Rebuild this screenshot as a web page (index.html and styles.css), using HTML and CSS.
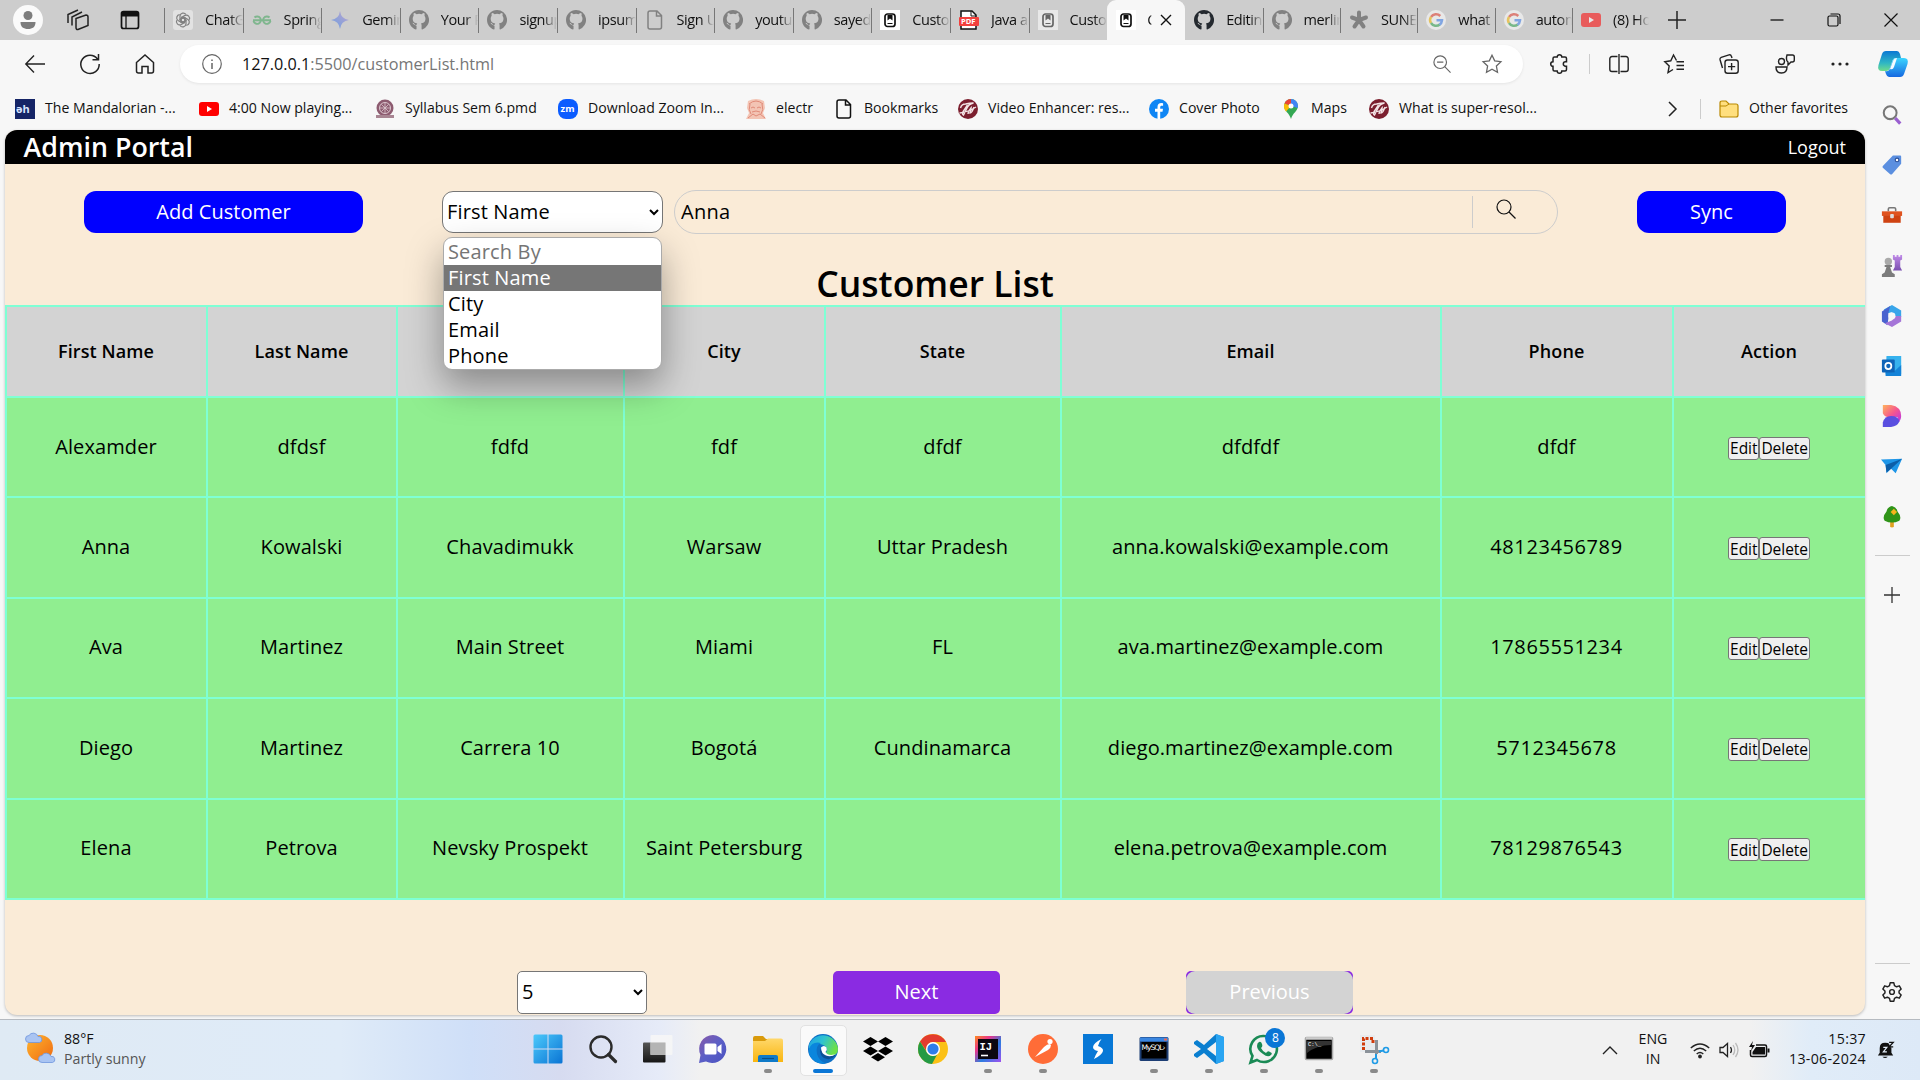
FILE: index.html
```html
<!DOCTYPE html>
<html lang="en">
<head>
<meta charset="utf-8">
<title>Customer List</title>
<link rel="stylesheet" href="styles.css">
</head>
<body>
<svg class="defs" width="0" height="0">
  <defs>
    <linearGradient id="g-blue" x1="0" y1="0" x2="1" y2="1"><stop offset="0" stop-color="#4cc9fb"/><stop offset="1" stop-color="#0a74d4"/></linearGradient>
    <linearGradient id="g-gem" x1="0" y1="1" x2="1" y2="0"><stop offset="0" stop-color="#6f9fe0"/><stop offset="1" stop-color="#b9a3cf"/></linearGradient>
    <linearGradient id="g-cop" x1="0" y1="0" x2="0" y2="1"><stop offset="0" stop-color="#0a78d4"/><stop offset=".6" stop-color="#2fb6c4"/><stop offset="1" stop-color="#6fdc8c"/></linearGradient>
    <linearGradient id="g-cop2" x1="0" y1="0" x2="0" y2="1"><stop offset="0" stop-color="#3bd5ff"/><stop offset="1" stop-color="#1668e0"/></linearGradient>
    <linearGradient id="g-purple" x1="0" y1="0" x2="1" y2="1"><stop offset="0" stop-color="#8a5aa8"/><stop offset=".5" stop-color="#5b5fc7"/><stop offset="1" stop-color="#4a52c0"/></linearGradient>
    <linearGradient id="g-folder" x1="0" y1="0" x2="0" y2="1"><stop offset="0" stop-color="#ffd86b"/><stop offset="1" stop-color="#f9b50f"/></linearGradient>
    <linearGradient id="g-edge" x1="0" y1="0" x2="1" y2=".4"><stop offset="0" stop-color="#1c9fe8"/><stop offset=".5" stop-color="#2fc3d0"/><stop offset="1" stop-color="#6be04a"/></linearGradient>
    <linearGradient id="g-ij" x1="0" y1="0" x2="1" y2="1"><stop offset="0" stop-color="#ff8a1e"/><stop offset=".3" stop-color="#e8358b"/><stop offset=".6" stop-color="#2b7de0"/><stop offset="1" stop-color="#a050f0"/></linearGradient>
    <linearGradient id="g-sun" x1="0" y1="0" x2="1" y2="1"><stop offset="0" stop-color="#ffb52e"/><stop offset="1" stop-color="#ef6a12"/></linearGradient>
    <linearGradient id="g-des" x1="0" y1="0" x2="1" y2="1"><stop offset="0" stop-color="#ffb35c"/><stop offset=".5" stop-color="#f5568f"/><stop offset="1" stop-color="#b331f0"/></linearGradient>
    <linearGradient id="g-dark" x1="0" y1="0" x2="0" y2="1"><stop offset="0" stop-color="#555"/><stop offset="1" stop-color="#161616"/></linearGradient>
    <linearGradient id="g-rook" x1="0" y1="0" x2="0" y2="1"><stop offset="0" stop-color="#c08ae8"/><stop offset="1" stop-color="#7a4fb0"/></linearGradient>
    <symbol id="i-github" viewBox="0 0 16 16"><path fill="currentColor" d="M8 0C3.58 0 0 3.58 0 8c0 3.54 2.29 6.53 5.47 7.59.4.07.55-.17.55-.38v-2.7c-.9-.1-2.9-1.1-3.3-2.3 1 .1 1.500.8 1.700 1.200.6.8 1.200.5 1.700.3.1-.5.3-.8.5-1-1.900-.2-3.650-.9-3.650-3.950 0-.87.31-1.590.82-2.150-.1-.2-.36-1 .08-2.100 0 0 .67-.21 2.200.82a7.600 7.600 0 0 1 4 0c1.530-1.040 2.200-.82 2.200-.82.44 1.100.16 1.900.08 2.100.51.56.82 1.270.82 2.150 0 3.070-1.870 3.750-3.650 3.950.29.25.54.73.54 1.480v3c0 .21.15.46.55.38A8 8 0 0 0 8 0z"/></symbol>
    <symbol id="i-page" viewBox="0 0 20 20"><path d="M5 1h7l4.500 4.500V17a2 2 0 0 1-2 2H5a2 2 0 0 1-2-2V3a2 2 0 0 1 2-2zM11.500 1.200V6h4.800" fill="none" stroke="currentColor" stroke-width="1.500"/></symbol>
    <symbol id="i-cust" viewBox="0 0 20 20"><path fill="#fff" d="M0 0h20v20H0z"/><rect x="5" y="4" width="10" height="12.500" rx="2.500" fill="none" stroke="#111" stroke-width="1.700"/><path d="M7.500 5h5v5.500l-2.500-2-2.500 2z" fill="#111"/><path d="M7.500 13.500h5" stroke="#111" stroke-width="1"/></symbol>
    <symbol id="i-google" viewBox="0 0 20 20"><circle cx="10" cy="10" r="10" fill="#fff"/><g fill="none" stroke-width="2.500"><path d="M14.300 6A6 6 0 0 0 5 7" stroke="#ea4335"/><path d="M5 6.800a6 6 0 0 0 0 6.400" stroke="#fbbc05"/><path d="M5 13a6 6 0 0 0 8.800 1.500" stroke="#34a853"/><path d="M13.500 14.700A6 6 0 0 0 16 10.300h-5.500" stroke="#4285f4"/></g></symbol>
    <symbol id="i-yt" viewBox="0 0 20 20"><rect y="3" width="20" height="14" rx="3" fill="#f00"/><path d="M8 7l5 3-5 3z" fill="#fff"/></symbol>
    <symbol id="i-maroon" viewBox="0 0 20 20"><circle cx="10" cy="10" r="10" fill="#7b1e2e"/><path d="M2.500 9q1-4 5-4 4-1 8-1-5 1-7 6l-3 6q-2-1 0-4l4-6M10 15q0-3 3-6l-1 5q2 0 4-6M1.500 14q9-1 16.500-6" fill="none" stroke="#f3e3e5" stroke-width="1.400"/></symbol>
    <symbol id="i-glass" viewBox="0 0 20 20"><circle cx="8" cy="8" r="7" fill="none" stroke="currentColor" stroke-width="1.200"/><path d="M13 13l6.500 6.500" stroke="currentColor" stroke-width="1.200"/></symbol>
    <symbol id="i-cloud" viewBox="0 0 18 11"><path d="M4 10.500a3.500 3.500 0 0 1 0-7A5 5 0 0 1 13 4.500a3 3 0 0 1 1.500 6z" fill="#a9c4f2" stroke="#6f96dd" stroke-width=".8"/></symbol>
  </defs>
</svg>

<div class="desktop">
  <header class="tabstrip">
    <div class="strip-left">
      <svg class="avatar" viewBox="0 0 30 30"><circle cx="15" cy="15" r="15" fill="#fafafa"/><circle cx="15" cy="10.500" r="4.500" fill="#7d7d7d"/><path d="M7.500 17h15c0 5-3 7-7.500 7s-7.500-2-7.500-7z" fill="#7d7d7d"/></svg>
      <svg class="ic22" viewBox="0 0 22 22" fill="none" stroke="#222" stroke-width="1.500"><path d="M1 14V5.500L11 1M5 16.500V8L15 3M9 9.500l10-3.500q2 0 2 2v8.500L11 20.500q-2 .3-2-2z"/></svg>
      <svg class="ic20" viewBox="0 0 20 20"><rect x="1.500" y="1.500" width="17" height="17" rx="2" fill="none" stroke="#111" stroke-width="1.700"/><path d="M1.500 2h17v4.500h-17z" fill="#111"/><path d="M6 6v12" stroke="#111" stroke-width="1.300"/></svg>
    </div>
    <nav class="tabs">
      <div class="tab dim"><svg viewBox="0 0 20 20"><rect width="20" height="20" rx="3" fill="#f4f4f4"/><g fill="none" stroke="#444" stroke-width="1.200"><path id="petal" d="M7 10.500V6a3.300 3.300 0 0 1 6-1.500M7 10.500l3 1.700 3.500-2"/><use href="#petal" transform="rotate(60 10 10)"/><use href="#petal" transform="rotate(120 10 10)"/><use href="#petal" transform="rotate(180 10 10)"/><use href="#petal" transform="rotate(240 10 10)"/><use href="#petal" transform="rotate(300 10 10)"/></g></svg><span>ChatGPT</span></div>
      <div class="tab dim"><svg viewBox="0 0 20 20" fill="none" stroke="#3fa45b" stroke-width="1.900"><path d="M1 10.300h18M2.500 7.500a3.700 3.700 0 1 1-1 3.500M17.500 7.500a3.700 3.700 0 1 0 1 3.500"/></svg><span>Spring</span></div>
      <div class="tab"><svg viewBox="0 0 20 20"><path d="M10 1q1 8 9 9-8 1-9 9-1-8-9-9 8-1 9-9z" fill="url(#g-gem)"/></svg><span>Gemini</span></div>
      <div class="tab dim"><svg><use href="#i-github"/></svg><span>Your Re</span></div>
      <div class="tab dim"><svg><use href="#i-github"/></svg><span>signup</span></div>
      <div class="tab dim"><svg><use href="#i-github"/></svg><span>ipsum</span></div>
      <div class="tab dim"><svg><use href="#i-page"/></svg><span>Sign Up</span></div>
      <div class="tab dim"><svg><use href="#i-github"/></svg><span>youtub</span></div>
      <div class="tab dim"><svg><use href="#i-github"/></svg><span>sayed</span></div>
      <div class="tab"><svg><use href="#i-cust"/></svg><span>Custom</span></div>
      <div class="tab"><svg viewBox="0 0 20 20"><path d="M2 1h11l4 4v14H2z" fill="#fff" stroke="#111" stroke-width="1.500"/><path d="M12 1v5h5" fill="none" stroke="#111"/><rect y="7" width="20" height="9" rx="1" fill="#f2403c"/><text x="2" y="14.200" font-size="7.500" font-weight="700" fill="#fff" font-family="Open Sans, sans-serif">PDF</text></svg><span>Java an</span></div>
      <div class="tab dim"><svg><use href="#i-cust"/></svg><span>Custom</span></div>
      <div class="tab active"><svg><use href="#i-cust"/></svg><span class="clip">C</span><svg class="close" viewBox="0 0 12 12"><path d="M1 1l10 10M11 1L1 11" stroke="#111" stroke-width="1.400"/></svg></div>
      <div class="tab"><svg class="dark"><use href="#i-github"/></svg><span>Editing</span></div>
      <div class="tab dim"><svg><use href="#i-github"/></svg><span>merlin</span></div>
      <div class="tab dim"><svg viewBox="0 0 20 20" stroke="#444" stroke-width="4" stroke-linecap="round"><path d="M10 10V2.500M10 10l7-2.500M10 10l4.500 6.500M10 10l-4.500 6.500M10 10L3 7.500"/></svg><span>SUNET</span></div>
      <div class="tab dim"><svg><use href="#i-google"/></svg><span>what i</span></div>
      <div class="tab dim"><svg><use href="#i-google"/></svg><span>autom</span></div>
      <div class="tab dim"><svg><use href="#i-yt"/></svg><span>(8) How</span></div>
    </nav>
    <svg class="newtab" viewBox="0 0 18 18"><path d="M9 0v18M0 9h18" stroke="#222" stroke-width="1.500"/></svg>
    <div class="winbtns">
      <svg viewBox="0 0 14 14"><path d="M.5 7h13" stroke="#111" stroke-width="1.300"/></svg>
      <svg viewBox="0 0 14 14" fill="none" stroke="#111" stroke-width="1.200"><rect x="1" y="3" width="10" height="10" rx="1.500"/><path d="M3.500 1h7.500a2 2 0 0 1 2 2v8"/></svg>
      <svg viewBox="0 0 14 14"><path d="M.5.5l13 13M13.500.5l-13 13" stroke="#111" stroke-width="1.200"/></svg>
    </div>
  </header>

  <div class="toolbar">
    <div class="nav-icons">
      <svg viewBox="0 0 20 20"><path d="M20 10H1M9 1.500L.8 10 9 18.500" fill="none" stroke="#222" stroke-width="1.400"/></svg>
      <svg viewBox="0 0 20 20"><path d="M17.500 5A9.200 9.200 0 1 0 19.200 10M18.500 0v5.800H12.500" fill="none" stroke="#222" stroke-width="1.500"/></svg>
      <svg viewBox="0 0 20 20"><path d="M1.500 8.500L10 1l8.500 7.500V17a2 2 0 0 1-2 2H13v-6.500H7V19H3.500a2 2 0 0 1-2-2z" fill="none" stroke="#222" stroke-width="1.500"/></svg>
    </div>
    <div class="address">
      <svg class="ic20" viewBox="0 0 20 20" fill="none" stroke="#666" stroke-width="1.200"><circle cx="10" cy="10" r="9.300"/><path d="M10 9v6M10 5.500v1.500" stroke-width="1.500"/></svg>
      <span class="url"><b>127.0.0.1</b>:5500/customerList.html</span>
      <svg class="ic18" viewBox="0 0 20 20" fill="none" stroke="#666" stroke-width="1.300"><circle cx="8" cy="8" r="7"/><path d="M13 13l6.500 6.500M4.500 8h7"/></svg>
      <svg class="ic20" viewBox="0 0 20 20"><path d="M10 1.200l2.700 5.700 6.200.8-4.500 4.300 1.100 6.200L10 15.200l-5.500 3 1.100-6.200L1.100 7.700l6.200-.8z" fill="none" stroke="#666" stroke-width="1.300"/></svg>
    </div>
    <div class="tools">
      <svg viewBox="0 0 20 20"><path d="M5.500 3h2.700a2.300 2.300 0 0 1 4.600 0H16q1.500 0 1.500 1.500v3.300h-1a2.200 2.200 0 0 0 0 4.400h1v3.300q0 1.500-1.500 1.500h-3.200a2.300 2.300 0 0 1-4.600 0H5.500Q4 17 4 15.500v-3.200a2.300 2.300 0 0 1 0-4.600V4.500Q4 3 5.500 3z" fill="none" stroke="#222" stroke-width="1.500"/></svg>
      <i class="vline"></i>
      <svg viewBox="0 0 20 20"><path d="M8.500 2.500H3A2.200 2.200 0 0 0 .8 4.700v10.600A2.200 2.200 0 0 0 3 17.500h5.500M11.500 2.500H17a2.200 2.200 0 0 1 2.200 2.200v10.600a2.200 2.200 0 0 1-2.200 2.200h-5.500M10 0v20" fill="none" stroke="#222" stroke-width="1.400"/></svg>
      <svg viewBox="0 0 20 20"><path d="M12.500 6.500L9.500 1 6.800 6.800.8 7.700l4.400 4.200L4 18.500l5-3M12.500 7.700H20M12.500 11.500H20M12.500 15.200H20" fill="none" stroke="#222" stroke-width="1.400"/></svg>
      <svg viewBox="0 0 20 20"><rect x="6" y="6" width="13.200" height="13.200" rx="2.500" fill="none" stroke="#222" stroke-width="1.400"/><path d="M12.600 9v7.200M9 12.600h7.200M3.500 14L1 5.500Q.7 4 2.200 3.400L10 .8q1.800-.5 2.300 1.200L13 4" fill="none" stroke="#222" stroke-width="1.400"/></svg>
      <svg viewBox="0 0 20 20" fill="none" stroke="#222" stroke-width="1.400"><circle cx="6.500" cy="7.500" r="3"/><path d="M1 13h11c0 4-2 6-5.500 6S1 17 1 13zM12 1h5.500Q19.300 1 19.300 3v3q0 2-2 2H16l-3 3V8q-1.500-1-1.500-3V3z"/></svg>
      <svg viewBox="0 0 20 20" fill="#222"><circle cx="3" cy="10" r="1.600"/><circle cx="10" cy="10" r="1.600"/><circle cx="17" cy="10" r="1.600"/></svg>
    </div>
    <svg class="copilot" viewBox="0 0 30 28"><path d="M8 1h11q2 0 3 3l1 4h-5q-3 0-4 4l-2 6q-1 3-4 3H4Q-1 21 .5 15L4 4q1-3 4-3z" fill="url(#g-cop)"/><path d="M22 27H11q-2 0-3-3l-1-3q4 1 5-3l2-6q1-4 4-4h8q5 0 3.500 6L26 24q-1 3-4 3z" fill="url(#g-cop2)"/><path d="M12 19l3-8q1-3 4-3l-3 9q-1 3-4 2z" fill="#f4fbff"/></svg>
  </div>

  <div class="bookmarks">
    <a><svg viewBox="0 0 20 20"><path fill="#152466" d="M0 0h20v20H0z"/><text x="1" y="14" font-size="11" font-weight="700" fill="#d8e4ff" font-family="Open Sans, sans-serif">əh</text></svg><span>The Mandalorian -...</span></a>
    <a><svg><use href="#i-yt"/></svg><span>4:00 Now playing...</span></a>
    <a><svg viewBox="0 0 20 20"><circle cx="10" cy="9" r="8.500" fill="#8d5b70"/><circle cx="10" cy="9" r="5.500" fill="none" stroke="#dcc6ce"/><path d="M10 4v10M5 9h10M6.500 5.500l7 7M13.500 5.500l-7 7" stroke="#dcc6ce" stroke-width=".8"/><path d="M1 16h18v3H1z" fill="#a88592"/></svg><span>Syllabus Sem 6.pmd</span></a>
    <a><svg viewBox="0 0 20 20"><rect width="20" height="20" rx="8" fill="#0b5cff"/><text x="2.500" y="13.300" font-size="9.500" font-weight="700" fill="#fff" font-family="Open Sans, sans-serif">zm</text></svg><span>Download Zoom In...</span></a>
    <a><svg viewBox="0 0 20 20"><path d="M2 2q8-4 16 0l1 7-2 5 3 6H0l3-6-2-5z" fill="#f3c4b4"/><path d="M3 5q7-6 14 0M5 9q2-2 4 0M11 9q2-2 4 0M6 13q4-2 8 0M2 19l5-4 3 2 4-2 5 4M4 5q-2 6 1 10M16 5q2 6-1 10" fill="none" stroke="#e08a78"/></svg><span>electr</span></a>
    <a><svg><use href="#i-page"/></svg><span>Bookmarks</span></a>
    <a><svg><use href="#i-maroon"/></svg><span>Video Enhancer: res...</span></a>
    <a><svg viewBox="0 0 20 20"><circle cx="10" cy="10" r="10" fill="#0f86f5"/><path d="M8.500 20v-7.300H6V9.800h2.500V8c0-2.600 1.300-4 4-4l1.600.2v2.600h-1.300c-1.200 0-1.600.6-1.600 1.500v1.500h2.800l-.5 2.900h-2.300V20z" fill="#fff"/></svg><span>Cover Photo</span></a>
    <a><svg viewBox="0 0 20 20"><path d="M10 0a7 7 0 0 1 7 7c0 5-5.500 7-7 13C8.500 14 3 12 3 7a7 7 0 0 1 7-7z" fill="#34a853"/><path d="M10 0a7 7 0 0 1 7 7l-.3 2L10 7z" fill="#4285f4"/><path d="M3.500 4.500A7 7 0 0 1 10 0v7z" fill="#ea4335"/><path d="M3.500 4.500L10 7l-5 5.500Q2 9 3.500 4.500z" fill="#fbbc04"/><circle cx="10" cy="7" r="2.500" fill="#fff"/></svg><span>Maps</span></a>
    <a><svg><use href="#i-maroon"/></svg><span>What is super-resol...</span></a>
    <svg class="more" viewBox="0 0 10 16"><path d="M1 1l7 7-7 7" fill="none" stroke="#222" stroke-width="1.500"/></svg>
    <a class="other"><svg viewBox="0 0 20 20"><path d="M1 4q0-2 2-2h4l3 3h7q2 0 2 2v9q0 2-2 2H3q-2 0-2-2z" fill="#ffdf7e" stroke="#b98900" stroke-width="1.200"/><path d="M1 7h6l3-2" fill="none" stroke="#b98900"/></svg><span>Other favorites</span></a>
  </div>

  <div class="middle">
    <main class="page">
      <div class="titlebar"><h1>Admin Portal</h1><a>Logout</a></div>
      <div class="controls">
        <button class="btn add">Add Customer</button>
        <div class="picker">
          <select class="field"><option>First Name</option></select>
          <ul class="menu"><li class="muted">Search By</li><li class="on">First Name</li><li>City</li><li>Email</li><li>Phone</li></ul>
        </div>
        <div class="search"><input value="Anna"><span><svg><use href="#i-glass"/></svg></span></div>
        <button class="btn sync">Sync</button>
      </div>
      <h2>Customer List</h2>
      <table>
        <colgroup><col class="c1"><col class="c2"><col class="c3"><col class="c4"><col class="c5"><col class="c6"><col class="c7"><col class="c8"></colgroup>
        <thead><tr><th>First Name</th><th>Last Name</th><th></th><th>City</th><th>State</th><th>Email</th><th>Phone</th><th>Action</th></tr></thead>
        <tbody>
          <tr><td>Alexamder</td><td>dfdsf</td><td>fdfd</td><td>fdf</td><td>dfdf</td><td>dfdfdf</td><td>dfdf</td><td class="act"><div><button>Edit</button><button>Delete</button></div></td></tr>
          <tr><td>Anna</td><td>Kowalski</td><td>Chavadimukk</td><td>Warsaw</td><td>Uttar Pradesh</td><td>anna.kowalski@example.com</td><td class="num">48123456789</td><td class="act"><div><button>Edit</button><button>Delete</button></div></td></tr>
          <tr><td>Ava</td><td>Martinez</td><td>Main Street</td><td>Miami</td><td>FL</td><td>ava.martinez@example.com</td><td class="num">17865551234</td><td class="act"><div><button>Edit</button><button>Delete</button></div></td></tr>
          <tr><td>Diego</td><td>Martinez</td><td>Carrera 10</td><td>Bogotá</td><td>Cundinamarca</td><td>diego.martinez@example.com</td><td class="num">5712345678</td><td class="act"><div><button>Edit</button><button>Delete</button></div></td></tr>
          <tr><td>Elena</td><td>Petrova</td><td>Nevsky Prospekt</td><td>Saint Petersburg</td><td></td><td>elena.petrova@example.com</td><td class="num">78129876543</td><td class="act"><div><button>Edit</button><button>Delete</button></div></td></tr>
        </tbody>
      </table>
      <div class="pager">
        <select class="field"><option>5</option></select>
        <button class="pbtn">Next</button>
        <div class="pwrap"><button class="pbtn off">Previous</button></div>
      </div>
    </main>
    <aside class="sidebar">
      <div class="apps">
        <svg viewBox="0 0 24 24"><circle cx="10" cy="9.500" r="7" fill="none" stroke="#777" stroke-width="2.200"/><path d="M15.500 15.500l5.500 6" stroke="#9a5fd0" stroke-width="3.500"/></svg>
        <svg viewBox="0 0 24 24"><path d="M13 1.500l8 .2q1 0 1 1v8L12 22q-1 .8-2 0L2 15q-.8-1 0-2z" fill="#5b8fe0"/><circle cx="17.500" cy="6.500" r="2" fill="#fff" stroke="#2c4f96" stroke-width="1.200"/></svg>
        <svg viewBox="0 0 24 24"><path d="M8 8V5.500q0-1.500 1.500-1.500h5Q16 4 16 5.500V8" fill="none" stroke="#777" stroke-width="1.700"/><path d="M1 8h22v5H1z" fill="#e0531f"/><path d="M2.500 12.500h19v8h-19z" fill="#cf4312"/><rect x="10" y="11" width="4" height="4.500" rx="1" fill="#ddd"/></svg>
        <svg viewBox="0 0 24 24"><path d="M13 0h2v2h2V0h2v2h2V0h2v5l-2 1v7l2 4H13l2-4V6l-2-1z" fill="url(#g-rook)"/><circle cx="8" cy="7" r="4" fill="#aaa"/><path d="M4 11h8v2h-2l2 6 3 2v3H1v-3l3-2 2-6H4z" fill="#7c7c7c"/></svg>
        <svg viewBox="0 0 24 24"><path d="M12 0l10 6v7l-7-1-3-4-5 1-4-4z" fill="#39a5ea"/><path d="M10 1L8 9v6l-1 7-6-4V7z" fill="#4a63cf"/><path d="M22 12v6l-10 6-8-4 8-3 4-5z" fill="#a575d8"/><circle cx="12" cy="12" r="3.800" fill="#f7f7f7"/></svg>
        <svg viewBox="0 0 24 24"><path d="M6 1h16v20H5z" fill="#36b2ee"/><path d="M5 15l16 8H5zM22 11v12H9z" fill="#1483d8"/><rect x="1" y="5" width="14" height="14" rx="1" fill="#0f64b8"/><circle cx="8" cy="12" r="3.300" fill="none" stroke="#fff" stroke-width="1.900"/></svg>
        <svg viewBox="0 0 24 24"><path d="M2 0h9q11 2 11 12 0 5-4 8V13q-13 3-16-4z" fill="url(#g-des)"/><path d="M2 24v-5q2-7 9-7 8 0 9 6-2 5-9 6z" fill="#5a4fe0"/></svg>
        <svg viewBox="0 0 24 24"><path d="M0 5l23-1-7 16-5-5-5 5-1-9z" fill="#1e96e8"/><path d="M5 11l18-7-12 11-5 4z" fill="#0c5ea8"/></svg>
        <svg viewBox="0 0 24 24"><path d="M10 15h4v8q-2 1-4 0z" fill="#e0a020"/><path d="M12 0q5 1 6 6 5 6 2 10-8 4-16 0-3-4 2-10 1-5 6-6z" fill="#2f9418"/><path d="M14 3l3.500 3.500L14 10l-3.500-3.500z" fill="#f5b41c"/></svg>
      </div>
      <hr>
      <svg class="plus" viewBox="0 0 16 16"><path d="M8 0v16M0 8h16" stroke="#333" stroke-width="1.300"/></svg>
      <hr class="low">
      <svg class="gear" viewBox="0 0 24 24" fill="none" stroke="#222" stroke-width="1.600"><path d="M10 2h4l.7 3 2.300 1.300 3-1 2 3.500-2.300 2.200v2l2.300 2.200-2 3.500-3-1-2.300 1.300L14 22h-4l-.7-3L7 17.700l-3 1-2-3.500L4.300 13v-2L2 8.800l2-3.500 3 1L9.300 5z" stroke-linejoin="round"/><circle cx="12" cy="12" r="2.600"/></svg>
    </aside>
  </div>

  <footer class="taskbar">
    <div class="weather">
      <div class="sunicon"><svg class="sun" viewBox="0 0 30 30"><circle cx="15" cy="15" r="13" fill="url(#g-sun)"/></svg><svg class="cl1"><use href="#i-cloud"/></svg><svg class="cl2"><use href="#i-cloud"/></svg></div>
      <div class="wtext"><span>88°F</span><span class="grey">Partly sunny</span></div>
    </div>
    <div class="dock">
      <div><svg viewBox="0 0 30 30" fill="url(#g-blue)"><path d="M.5 2q0-1.500 1.500-1.500h12.500v14H.5zM15.500.5H28q1.500 0 1.500 1.500v12.500h-14zM.5 15.500h14v14H2q-1.500 0-1.500-1.500zM15.500 15.500h14V28q0 1.500-1.500 1.500H15.500z"/></svg></div>
      <div><svg viewBox="0 0 30 30" fill="none" stroke="#2b2b2b"><circle cx="13" cy="13" r="10.500" stroke-width="2.400"/><path d="M20.500 20.500l7 7" stroke-width="3.200" stroke-linecap="round"/></svg></div>
      <div><svg viewBox="0 0 30 30"><rect x="0" y="8.500" width="22.500" height="20" rx="1" fill="url(#g-dark)"/><rect x="7.500" y="1" width="22" height="20" rx="1" fill="#f6f6f6" opacity=".9"/><path d="M7.500 8.500h15V21h-15z" fill="#b4b4b4"/></svg></div>
      <div><svg viewBox="0 0 30 30"><path d="M15 1a14 14 0 1 1-7 26.500L1 29l1.500-8A14 14 0 0 1 15 1z" fill="url(#g-purple)"/><rect x="6.500" y="9.500" width="12" height="11" rx="1.500" fill="#fff"/><path d="M19.500 13l4-3v10l-4-3z" fill="#fff"/></svg></div>
      <div class="run"><svg viewBox="0 0 30 30"><path d="M0 4q0-2 2-2h8l3 3h15v8H0z" fill="#d99a0b"/><path d="M0 7h12l3-2.500h13q2 0 2 2V28H0z" fill="url(#g-folder)"/><path d="M5 28v-5q0-2 2-2h16q2 0 2 2v5z" fill="#0f7ac8"/><path d="M9 24.500h12" stroke="#0a4f88" stroke-width="1.200"/></svg></div>
      <div class="run current"><svg viewBox="0 0 30 30"><circle cx="15" cy="15" r="15" fill="#0d6fc4"/><path d="M1 11A15 15 0 0 1 30 15q0 7-8 7-5 0-5-3 2-1 2-4-1-4-7-5Q5 9 1 15z" fill="url(#g-edge)"/><path d="M1 15q3-8 12-6-6 3-4 11 2 7 9 9.500Q6 31 1 20z" fill="#0a86dd"/><path d="M12 16q3-4 6-1 1 2-1 4 2 4 9 2 2-1 1 1-5 5-11 2-4-3-4-8z" fill="#0c4f96"/><path d="M13 13.500q3-3 5.500 0 1 2-1 4.500 2 4 9 2.500l1.500-.5q-5 3.500-10 1.500-5-2-5-8z" fill="#fff"/></svg></div>
      <div><svg viewBox="0 0 30 30"><path d="M7.500 3L15 7.500 7.500 12 0 7.500zM22.500 3L30 7.500 22.500 12 15 7.500zM7.500 12.500L15 17l-7.500 4.500L0 17zM22.500 12.500L30 17l-7.500 4.500L15 17zM15 19l7 4.300-7 4.200-7-4.200z"/></svg></div>
      <div><svg viewBox="0 0 30 30"><circle cx="15" cy="15" r="15" fill="#fbc116"/><path d="M2 7.500A15 15 0 0 1 28 8H15a7 7 0 0 0-6.500 9z" fill="#e33b2e"/><path d="M2 7.500l7 11a7 7 0 0 0 10 2.300L14 30A15 15 0 0 1 2 7.500z" fill="#249a45"/><circle cx="15" cy="15" r="7" fill="#fff"/><circle cx="15" cy="15" r="5.600" fill="#2f7de9"/></svg></div>
      <div class="run"><svg viewBox="0 0 30 30"><path fill="url(#g-ij)" d="M2 2h26v26H2z"/><path fill="#0b0710" d="M5 5h20v20H5z"/><text x="6.500" y="16" font-size="10.500" font-weight="700" fill="#fff" font-family="Liberation Mono, monospace">IJ</text><path d="M8 21.500h7" stroke="#fff" stroke-width="1.600"/></svg></div>
      <div class="run"><svg viewBox="0 0 30 30"><circle cx="15" cy="15" r="15" fill="#ff6c37"/><path d="M7 23l9-10q3-3 6-3l1 1q0 3-3 5z" fill="#fff"/><circle cx="22" cy="7.500" r="2.600" fill="#fff"/></svg></div>
      <div><svg viewBox="0 0 30 30"><path fill="#0878d6" d="M0 0h30v30H0z"/><path d="M18.500 5q-8 4-8.500 8 0 3 5 4-2 3-4 8 8-4 9-8 .5-3-5-5 1-4 3.500-7z" fill="#fff"/></svg></div>
      <div class="run"><svg viewBox="0 0 30 30"><rect x=".5" y="3" width="29" height="24" rx="1.500" fill="#1d3e74"/><path fill="#3a86e0" d="M1 3.500h28v4H1z"/><path fill="#000" d="M2.500 8h25v16.500h-25z"/><path d="M25 4.500h3v2h-3z" fill="#f06a50"/><text x="2.500" y="15.500" font-size="7.500" fill="#fff" font-family="DejaVu Sans, sans-serif" textLength="24">MySQL›</text></svg></div>
      <div class="run"><svg viewBox="0 0 30 30"><path d="M22 0l8 3v24l-8 3L10 19l-7 5-3-2v-2l7-5-7-5V8l3-2 7 5z" fill="#0a7fd0"/><path d="M22 8v14l-9-7z" fill="#f2f2f2"/><path d="M22 0l8 3v24l-8 3z" fill="#2aa5f2"/></svg></div>
      <div class="run"><svg viewBox="0 0 30 30"><path d="M15.500 2A13 13 0 1 1 8 26L1.500 28.500 3.500 22A13 13 0 0 1 15.500 2z" fill="none" stroke="#1a8a55" stroke-width="2.600"/><path d="M10 8q2-1 3 2t-1 4q2 4 5 5 2-3 4-1 3 1 1 3-3 3-8-1-6-4-6-8 0-3 2-4z" fill="#1a8a55"/></svg><b class="badge">8</b></div>
      <div class="run"><svg viewBox="0 0 30 30"><rect x="1.500" y="3.500" width="27" height="22" rx="1" fill="#000" stroke="#aaa" stroke-width="1.600"/><path d="M2 4.500h26" stroke="#ccc" stroke-width="2.500"/><path d="M3 7h24v4q-14 0-24 8z" fill="#333"/><text x="4" y="11.500" font-size="5.500" fill="#fff" font-family="Liberation Mono, monospace">C:\_</text></svg></div>
      <div class="run"><svg viewBox="0 0 30 30" fill="none"><path d="M1 1h15v17H1z" fill="#e8ebee"/><path d="M4.500 16V4.500H14V9" stroke="#d13c0c" stroke-width="3" stroke-dasharray="3 1.500"/><path d="M17.500 6v14M6 17.500h16" stroke="#8b9299" stroke-width="3"/><circle cx="27" cy="16" r="2.500" stroke="#1f9be6" stroke-width="1.600"/><circle cx="16" cy="27" r="2.500" stroke="#1f9be6" stroke-width="1.600"/><path d="M17 20v4.500M20 17.500l4.500-1" stroke="#1f9be6" stroke-width="2"/></svg></div>
    </div>
    <div class="tray">
      <svg class="up" viewBox="0 0 16 10"><path d="M1 9l7-7 7 7" fill="none" stroke="#222" stroke-width="1.400"/></svg>
      <div class="lang"><span>ENG</span><span>IN</span></div>
      <svg class="ti" viewBox="0 0 20 20" fill="none" stroke="#222" stroke-width="1.400"><path d="M.8 8q9.200-8 18.400 0M3.800 11q6.200-5.500 12.400 0M6.700 14q3.300-3 6.600 0"/><circle cx="10" cy="16.500" r="1.200" fill="#222"/></svg>
      <svg class="ti" viewBox="0 0 20 20" fill="none" stroke="#222" stroke-width="1.300"><path d="M1 7.500h3l4.500-4v13l-4.500-4H1z"/><path d="M11.500 7q2 3 0 6"/><path d="M14 5q3.500 5 0 10M16.500 3q5 7 0 14" stroke="#bbb"/></svg>
      <svg class="ti bat" viewBox="0 0 22 20"><path d="M2.500 10v5q0 1.500 1.500 1.500h13q1.500 0 1.500-1.500V6.500Q18.500 5 17 5H8" fill="none" stroke="#111" stroke-width="1.500"/><path d="M8 7h9v7.500H4.500V12zM19.500 8.500h2v4h-2zM5 1L1 7h3l-1 4 4-6H4z" fill="#111"/></svg>
      <div class="clock"><span>15:37</span><span>13-06-2024</span></div>
      <svg class="bell" viewBox="0 0 20 20"><path d="M3 13V8q0-6 6-6 7 0 7 6v5l2 3H1zM6 17.500h6q-3 3-6 0z" fill="#111"/><path d="M7 7h4l-4 5h4" fill="none" stroke="#e4eef9" stroke-width="1.300"/><path d="M12 0h8v7h-5z" fill="#dfeaf7"/><path d="M13.500 1.500h4.500l-4.500 5H18" fill="none" stroke="#111" stroke-width="1.500"/></svg>
    </div>
  </footer>
</div>
</body>
</html>
```
FILE: styles.css
```css
* { box-sizing: border-box; }
body { margin: 0; font-family: "Open Sans", "Noto Sans", sans-serif; font-size: 14px; color: #111; overflow: hidden; }
.defs { position: absolute; }
svg { display: block; flex: none; overflow: visible; }
button, select, input { font-family: inherit; }
.desktop { width: 1920px; height: 1080px; display: flex; flex-direction: column; background: #f7f7f7; }
.ic18 { width: 18px; height: 18px; }
.ic20 { width: 20px; height: 20px; }
.ic22 { width: 22px; height: 22px; }

/* tab strip */
.tabstrip { height: 40px; background: #cdcdcd; display: flex; align-items: center; }
.strip-left { width: 164px; display: flex; align-items: center; padding-left: 13px; }
.avatar { width: 30px; height: 30px; margin-right: 24px; }
.strip-left .ic22 { margin-right: 31px; }
.tabs { width: 1486px; height: 40px; display: grid; grid-template-columns: repeat(12, 78.600px) 78px repeat(6, 77.400px); }
.tab { display: flex; align-items: center; padding-left: 9px; position: relative; overflow: hidden; min-width: 0; }
.tab::before { content: ""; position: absolute; left: 0; top: 8px; width: 1px; height: 25px; background: #777; }
.tab svg { width: 20px; height: 20px; }
.tab.dim svg { opacity: .55; color: #444; }
.tab .dark { color: #24292f; }
.tab span { margin: -2px 0 0 12px; width: 38px; overflow: hidden; white-space: nowrap; font-size: 14.500px; letter-spacing: -.4px; -webkit-mask-image: linear-gradient(90deg, #000 65%, transparent); mask-image: linear-gradient(90deg, #000 65%, transparent); }
.tab.active { background: #f7f7f7; border-radius: 9px 9px 0 0; }
.tab.active::before, .tab.active + .tab::before { display: none; }
.tab.active .clip { width: 5px; margin-left: 11px; }
.tab.active .close { width: 12px; height: 12px; margin-left: 8px; }
.newtab { width: 18px; height: 18px; margin-left: 18px; }
.winbtns { margin-left: auto; display: flex; gap: 43px; margin-right: 22px; }
.winbtns svg { width: 14px; height: 14px; }

/* toolbar */
.toolbar { height: 47px; display: flex; align-items: center; }
.nav-icons { width: 180px; padding-left: 25px; display: flex; gap: 35px; }
.nav-icons svg { width: 20px; height: 20px; }
.address { width: 1343px; height: 38px; border-radius: 19px; background: #fff; box-shadow: 0 1px 3px rgba(0,0,0,.08); display: flex; align-items: center; padding: 0 21px 0 22px; }
.url { font-size: 16.200px; margin-left: 20px; flex: 1; color: #767676; }
.url b { font-weight: 400; color: #111; }
.address .ic18 { margin-right: 31px; }
.tools { margin-left: 26px; display: flex; align-items: center; }
.tools svg { width: 20px; height: 20px; margin-right: 35.200px; }
.tools svg:first-child { margin-right: 20px; }
.vline { width: 1px; height: 20px; background: #ccc; margin-right: 19px; }
.tools svg:last-child { margin-right: 0; }
.copilot { width: 30px; height: 28px; margin-left: auto; margin-right: 12px; }

/* bookmarks */
.bookmarks { height: 43px; padding-left: 15px; display: grid; grid-template-columns: 184px 176px 183px 188px 88px 124px 191px 132px 88px 299px 32px auto; align-items: center; font-size: 14.100px; }
.bookmarks a { display: flex; align-items: center; gap: 10px; white-space: nowrap; }
.bookmarks a span { margin-top: -2px; }
.bookmarks a svg { width: 20px; height: 20px; }
.more { width: 10px; height: 16px; }
.other { border-left: 1px solid #ccc; height: 20px; padding-left: 18px; }

/* web page */
.middle { height: 889px; display: flex; }
.page { width: 1860px; height: 885px; margin-left: 5px; background: #faebd7; border-radius: 12px; overflow: hidden; box-shadow: 0 1px 3px rgba(0,0,0,.25); font-size: 20px; color: #000; }
.titlebar { height: 34px; background: #000; color: #fff; display: flex; justify-content: space-between; align-items: center; padding: 0 19px 0 18.500px; }
h1 { margin: 0; font-size: 26.800px; font-weight: 600; line-height: 34px; }
.titlebar a { font-size: 18px; line-height: 34px; }
.controls { height: 96px; padding: 26px 0 0 79px; display: flex; align-items: flex-start; }
.btn { height: 42px; margin-top: 1px; border: 0; border-radius: 12px; background: #00f; color: #fff; font-size: 20px; letter-spacing: .05px; padding: 0 0 1px; }
.add { width: 279px; }
.picker { position: relative; margin: 1px 11px 0 79px; width: 221px; }
.field { display: block; border: 1px solid #767676; background: #fff; color: #000; font-size: 20px; padding: 0 0 2px; }
.picker .field { width: 221px; height: 42px; border-radius: 11px; letter-spacing: .15px; }
.menu { position: absolute; z-index: 3; top: 46px; left: 0; width: 219px; margin: 0 0 0 1px; padding: 1px; list-style: none; background: #fff; border: 1px solid #aaa; border-radius: 9px; box-shadow: 0 16px 36px rgba(0,0,0,.35); overflow: hidden; height: 133px; letter-spacing: .15px; }
.menu li { height: 26px; line-height: 26px; padding-left: 4px; margin: 0 -1px; }
.menu .muted { color: #757575; }
.menu .on { background: #767676; color: #fff; }
.search { width: 884px; height: 44px; border: 1px solid #ccc; border-radius: 22px; display: flex; align-items: center; }
.search input { flex: 1; border: 0; background: none; font-size: 20px; letter-spacing: .3px; padding: 0 0 2px 6px; outline: 0; }
.search span { width: 85px; height: 32px; border-left: 1px solid #ccc; padding: 3px 0 0 23px; }
.search svg { width: 20px; height: 20px; color: #111; }
.sync { width: 149px; margin-left: 79px; }
h2 { margin: 0; height: 45px; line-height: 47px; text-align: center; font-size: 35.500px; font-weight: 600; }
table { width: 1860px; table-layout: fixed; border-collapse: collapse; text-align: center; }
.c1 { width: 201px; } .c2 { width: 190px; } .c3 { width: 227px; } .c4 { width: 201px; }
.c5 { width: 236px; } .c6 { width: 380px; } .c7 { width: 232px; } .c8 { width: 193px; }
th, td { border: 2px solid aquamarine; padding: 0 1px 2px 0; white-space: nowrap; }
th { height: 91px; background: lightgray; font-size: 18px; font-weight: 600; letter-spacing: .1px; }
td { height: 100.400px; background: lightgreen; letter-spacing: .1px; }
.num { letter-spacing: .6px; }
.act div { display: flex; justify-content: center; padding-top: 4px; }
.act button { font-size: 15.500px; line-height: 20px; height: 23px; border: 1px solid #767676; border-radius: 3px; background: #efefef; color: #000; padding: 0 1px; letter-spacing: -.05px; }
.pager { display: flex; padding: 71px 0 0 512px; }
.pager .field { width: 130px; height: 43px; border-radius: 5px; margin-right: 186px; }
.pbtn { width: 167px; height: 43px; border: 0; border-radius: 5px; background: blueviolet; color: #fff; font-size: 20px; margin-right: 186px; padding: 0 0 1px; }
.pwrap { background: blueviolet; border-radius: 5px; height: 43px; }
.off { background: lightgray; border-radius: 9px; margin: 0; display: block; }

/* edge sidebar */
.sidebar { width: 54px; display: flex; flex-direction: column; align-items: center; }
.apps { display: flex; flex-direction: column; gap: 28.200px; margin-top: -26px; }
.apps svg { width: 22px; height: 22px; }
.sidebar hr { width: 35px; border: 0; height: 1px; background: #ccc; margin: 27px 0 31px; flex: none; }
.plus { width: 16px; height: 16px; }
.sidebar hr.low { margin: auto 0 17px; }
.gear { width: 22px; height: 22px; margin-bottom: 16px; }

/* taskbar */
.taskbar { height: 61px; border-top: 1px solid #b5bac0; display: flex; align-items: center; background: linear-gradient(90deg, #dfeaf4 0, #dfebf8 340px, #cfdff8 470px, #d6dbf0 560px, #e6ebf8 660px, #f1f1f1 700px, #f1f1f1 1750px, #e0ecf8 1810px, #dde9f7); }
.weather { width: 520px; display: flex; padding-left: 25px; gap: 9px; }
.sunicon { width: 30px; height: 34px; position: relative; }
.sun { width: 30px; height: 30px; margin-top: 2px; }
.cl1, .cl2 { position: absolute; width: 18px; height: 11px; }
.cl1 { left: 0; top: 1px; }
.cl2 { right: -1px; bottom: 2px; }
.wtext, .lang, .clock { display: flex; flex-direction: column; line-height: 20px; font-size: 14.200px; margin-top: -2px; }
.grey { color: #555; }
.dock { display: flex; height: 100%; }
.dock div { width: 55.100px; display: flex; flex-direction: column; align-items: center; justify-content: center; position: relative; }
.dock svg { width: 30px; height: 30px; z-index: 1; margin-top: -2px; }
.run::after { content: ""; position: absolute; bottom: 7px; width: 8px; height: 4px; border-radius: 2px; background: #8a8a8a; }
.current::after { width: 20px; background: #0a76d6; }
.current::before { content: ""; position: absolute; top: 5px; width: 45px; height: 49px; border-radius: 5px; background: #fafafa; border: 1px solid #e2e2e2; }
.badge { position: absolute; z-index: 2; top: 8px; right: 6px; width: 20px; height: 20px; border-radius: 10px; background: #0a76d6; color: #fff; font-size: 12px; font-weight: 400; line-height: 20px; text-align: center; }
.tray { flex: 1; display: flex; align-items: center; justify-content: flex-end; padding-right: 25px; }
.up { width: 16px; height: 10px; margin-right: 20px; }
.lang { width: 30px; text-align: center; margin-right: 22px; }
.ti { width: 20px; height: 20px; margin-right: 9px; }
.bat { width: 22px; margin-right: 16px; }
.clock { width: 80px; text-align: right; margin-right: 11px; white-space: nowrap; align-items: flex-end; letter-spacing: .3px; }
.bell { width: 18px; height: 20px; }
```
